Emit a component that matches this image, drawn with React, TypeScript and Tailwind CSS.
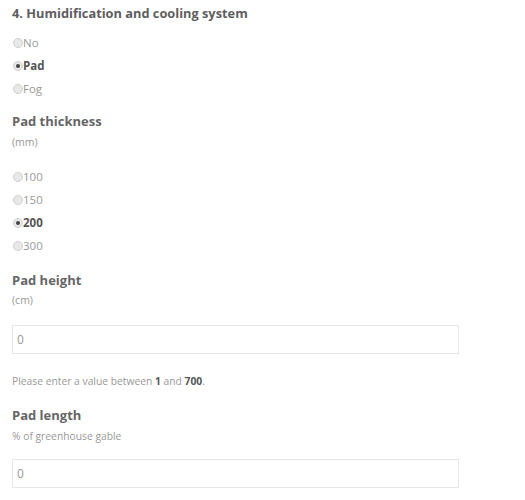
import { useState } from 'react';

type Option = { value: string; label: string };

const systemOptions: Option[] = [
  { value: 'no', label: 'No' },
  { value: 'pad', label: 'Pad' },
  { value: 'fog', label: 'Fog' },
];

const thicknessOptions: Option[] = [
  { value: '100', label: '100' },
  { value: '150', label: '150' },
  { value: '200', label: '200' },
  { value: '300', label: '300' },
];

function RadioRow({ option, checked, onSelect }: { option: Option; checked: boolean; onSelect: () => void }) {
  return (
    <label className="flex items-center h-[23px] cursor-pointer" onClick={onSelect}>
      <span className="w-[10px] h-[10px] ml-px rounded-full border border-[#d0d0d0] bg-[#e8e8e8] flex items-center justify-center">
        {checked && <span className="w-[4px] h-[4px] rounded-full bg-[#444]" />}
      </span>
      <span className={checked ? 'text-[11.5px] font-bold text-[#555]' : 'text-[11.5px] text-[#999]'}>{option.label}</span>
    </label>
  );
}

export default function App() {
  const [system, setSystem] = useState('pad');
  const [thickness, setThickness] = useState('200');
  const [height, setHeight] = useState('0');
  const [length, setLength] = useState('0');

  return (
    <div className="w-[525px] h-[500px] bg-white px-3 font-['Open_Sans',sans-serif] overflow-hidden">
      <h3 className="text-[12.8px] leading-[26px] font-bold text-[#5e5e5e]">4. Humidification and cooling system</h3>

      <div className="mt-[5px]">
        {systemOptions.map((o) => (
          <RadioRow key={o.value} option={o} checked={system === o.value} onSelect={() => setSystem(o.value)} />
        ))}
      </div>

      {/* Pad thickness */}
      <h4 className="mt-[11px] text-[13px] leading-[20px] font-bold text-[#666]">Pad thickness</h4>
      <p className="mt-[2px] text-[10.5px] leading-[18px] text-[#999]">(mm)</p>
      <div className="mt-[14px]">
        {thicknessOptions.map((o) => (
          <RadioRow key={o.value} option={o} checked={thickness === o.value} onSelect={() => setThickness(o.value)} />
        ))}
      </div>

      {/* Pad height */}
      <h4 className="mt-[13px] text-[13px] leading-[20px] font-bold text-[#666]">Pad height</h4>
      <p className="mt-px text-[10.5px] leading-[18px] text-[#999]">(cm)</p>
      <input
        value={height}
        onChange={(e) => setHeight(e.target.value)}
        className="mt-4 block w-[447px] h-[29px] border border-[#e6e6e6] px-1 text-[12px] text-[#999] outline-none"
      />
      <p className="mt-[18px] text-[10.3px] leading-[18px] text-[#999]">
        Please enter a value between <b className="text-[#555]">1</b> and <b className="text-[#555]">700</b>.
      </p>

      {/* Pad length */}
      <h4 className="mt-[15px] text-[13px] leading-[20px] font-bold text-[#666]">Pad length</h4>
      <p className="mt-[2px] text-[10.3px] leading-[18px] text-[#999]">% of greenhouse gable</p>
      <input
        value={length}
        onChange={(e) => setLength(e.target.value)}
        className="mt-[14px] block w-[447px] h-[29px] border border-[#e6e6e6] px-1 text-[12px] text-[#999] outline-none"
      />
    </div>
  );
}
